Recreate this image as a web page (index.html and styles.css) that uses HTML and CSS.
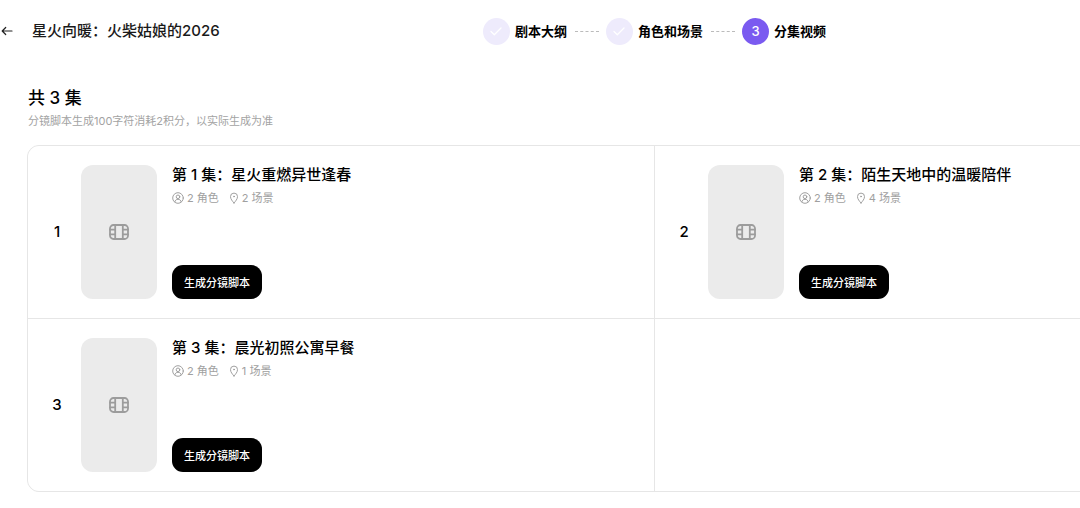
FILE: index.html
```html
<!DOCTYPE html>
<html lang="zh-CN">
<head>
    <meta charset="UTF-8">
    <meta name="viewport" content="width=device-width, initial-scale=1.0">
    <title>星火向暖：火柴姑娘的2026</title>
    <link rel="stylesheet" href="styles.css">
</head>
<body>
    <!-- Shared icons -->
    <svg class="sprite" aria-hidden="true">
        <symbol id="icon-film" viewBox="0 0 20 16">
            <rect x="1" y="1" width="18" height="14" rx="3.5"/>
            <path d="M6.2 1v14M13.8 1v14M1 5.700h5.200M1 10.300h5.200M13.800 5.700H19M13.800 10.300H19"/>
        </symbol>
        <symbol id="icon-role" viewBox="0 0 12 12">
            <circle cx="6" cy="6" r="5.3"/>
            <circle cx="6" cy="4.8" r="1.8"/>
            <path d="M2.8 9.800c.3-1.600 1.500-2.500 3.200-2.500s2.900.9 3.200 2.500"/>
        </symbol>
        <symbol id="icon-place" viewBox="0 0 10 12">
            <path d="M5 11C3.400 9.200 1.500 7 1.500 4.600a3.500 3.500 0 0 1 7 0C8.500 7 6.600 9.200 5 11z"/>
            <circle cx="5" cy="4.500" r=".5"/>
        </symbol>
        <symbol id="icon-check" viewBox="0 0 14 14">
            <path d="M2 7.500l3.300 3.200L12 4"/>
        </symbol>
    </svg>

    <div class="page">
        <header class="header">
            <div class="header-left">
                <button class="back-button" type="button" aria-label="返回">
                    <svg class="back-icon" viewBox="0 0 12 12"><path d="M11 6H1.200M4.700 2.500L1.200 6l3.500 3.500"/></svg>
                </button>
                <h1 class="project-title">星火向暖：火柴姑娘的2026</h1>
            </div>

            <ol class="steps">
                <li class="step">
                    <span class="step-dot"><svg class="check-icon"><use href="#icon-check"/></svg></span>
                    <span class="step-label">剧本大纲</span>
                </li>
                <li class="step">
                    <span class="step-dot"><svg class="check-icon"><use href="#icon-check"/></svg></span>
                    <span class="step-label">角色和场景</span>
                </li>
                <li class="step">
                    <span class="step-dot step-dot-active">3</span>
                    <span class="step-label">分集视频</span>
                </li>
            </ol>
        </header>

        <main class="content">
            <h2 class="section-title">共 3 集</h2>
            <p class="section-note">分镜脚本生成100字符消耗2积分，以实际生成为准</p>

            <div class="episode-grid">
                <article class="episode">
                    <div class="episode-number">1</div>
                    <div class="episode-cover"><svg class="film-icon"><use href="#icon-film"/></svg></div>
                    <div class="episode-body">
                        <h3 class="episode-title">第 1 集：星火重燃异世逢春</h3>
                        <div class="episode-meta">
                            <span class="meta-item"><svg class="role-icon"><use href="#icon-role"/></svg>2 角色</span>
                            <span class="meta-item"><svg class="place-icon"><use href="#icon-place"/></svg>2 场景</span>
                        </div>
                        <button class="generate-button" type="button">生成分镜脚本</button>
                    </div>
                </article>

                <article class="episode">
                    <div class="episode-number">2</div>
                    <div class="episode-cover"><svg class="film-icon"><use href="#icon-film"/></svg></div>
                    <div class="episode-body">
                        <h3 class="episode-title">第 2 集：陌生天地中的温暖陪伴</h3>
                        <div class="episode-meta">
                            <span class="meta-item"><svg class="role-icon"><use href="#icon-role"/></svg>2 角色</span>
                            <span class="meta-item"><svg class="place-icon"><use href="#icon-place"/></svg>4 场景</span>
                        </div>
                        <button class="generate-button" type="button">生成分镜脚本</button>
                    </div>
                </article>

                <article class="episode">
                    <div class="episode-number">3</div>
                    <div class="episode-cover"><svg class="film-icon"><use href="#icon-film"/></svg></div>
                    <div class="episode-body">
                        <h3 class="episode-title">第 3 集：晨光初照公寓早餐</h3>
                        <div class="episode-meta">
                            <span class="meta-item"><svg class="role-icon"><use href="#icon-role"/></svg>2 角色</span>
                            <span class="meta-item"><svg class="place-icon"><use href="#icon-place"/></svg>1 场景</span>
                        </div>
                        <button class="generate-button" type="button">生成分镜脚本</button>
                    </div>
                </article>

                <div class="episode"></div>
            </div>
        </main>
    </div>
</body>
</html>
```

FILE: styles.css
```css
* {
    box-sizing: border-box;
    margin: 0;
    padding: 0;
}
body {
    font-family: Inter, "Noto Sans CJK SC", sans-serif;
    color: #000;
    background: #fff;
    overflow-x: hidden;
}
button {
    font-family: inherit;
    border: none;
    cursor: pointer;
}
svg {
    fill: none;
    stroke: currentColor;
    stroke-linecap: round;
    stroke-linejoin: round;
}
.sprite {
    display: none;
}
/* desktop layout, the two columns never get narrower than this */
.page {
    min-width: 1309px;
}

/* Header */
.header {
    display: grid;
    grid-template-columns: 1fr auto 1fr;
    align-items: center;
    height: 62px;
}
.header-left {
    display: flex;
    align-items: center;
    gap: 19px;
}
.back-button {
    display: flex;
    background: none;
    color: #222;
    padding-left: 1px;
}
.back-icon {
    width: 12px;
    height: 12px;
    stroke-width: 1.2;
}
.project-title {
    font-size: 15px;
    font-weight: 500;
    line-height: 22px;
    color: #1a1a1a;
}
.steps {
    display: flex;
    align-items: center;
    list-style: none;
    gap: 7px;
}
.step {
    display: flex;
    align-items: center;
    gap: 5px;
    font-size: 13px;
    line-height: 20px;
}
.step-label {
    padding-bottom: 1px;
    font-weight: 700;
}
.step:not(:last-child)::after {
    content: "";
    width: 24px;
    margin-left: 3px;
    border-top: 1px dashed #bbb;
}
.step-dot {
    display: flex;
    align-items: center;
    justify-content: center;
    width: 27px;
    height: 27px;
    border-radius: 50%;
    background: #eeebfc;
    color: #fff;
    font-weight: 500;
}
.step-dot-active {
    background: #7a5af0;
}
.check-icon {
    width: 14px;
    height: 14px;
    stroke-width: 1.3;
}

/* Episodes */
.content {
    padding: 24px 27px;
}
.section-title {
    font-size: 17px;
    font-weight: 500;
    line-height: 24px;
}
.section-note {
    margin-top: 2px;
    font-size: 11px;
    line-height: 18px;
    color: #a3a3a3;
}
.section-title,
.section-note {
    padding-left: 1px;
}
.episode-grid {
    display: grid;
    grid-template-columns: 1fr 1fr;
    gap: 1px;
    margin-top: 15px;
    border: 1px solid #e6e6e6;
    border-radius: 12px;
    background: #e6e6e6;
    overflow: hidden;
}
.episode {
    display: flex;
    padding: 19px 15px 19px 0;
    background: #fff;
}
.episode-number {
    width: 53px;
    padding: 0 0 2px 5px;
    align-self: center;
    text-align: center;
    font-size: 15px;
    font-weight: 500;
}
.episode-cover {
    display: flex;
    align-items: center;
    justify-content: center;
    width: 76px;
    height: 134px;
    border-radius: 12px;
    background: #ebebeb;
    color: #9c9c9c;
}
.film-icon {
    width: 20px;
    height: 16px;
    stroke-width: 1.8;
}
.episode-body {
    display: flex;
    flex-direction: column;
    align-items: flex-start;
    padding-left: 15px;
}
.episode-title {
    font-size: 15px;
    font-weight: 500;
    line-height: 20px;
}
.episode-meta {
    display: flex;
    gap: 10px;
    margin-top: 4px;
    font-size: 11px;
    line-height: 18px;
    color: #a0a0a0;
}
.meta-item {
    display: flex;
    align-items: center;
    gap: 3px;
}
.role-icon {
    width: 12px;
    height: 12px;
}
.place-icon {
    width: 10px;
    height: 12px;
}
.generate-button {
    margin-top: auto;
    height: 34px;
    padding: 0 12px 1px;
    border-radius: 11px;
    background: #000;
    color: #fff;
    font-size: 11px;
    font-weight: 500;
}
```
